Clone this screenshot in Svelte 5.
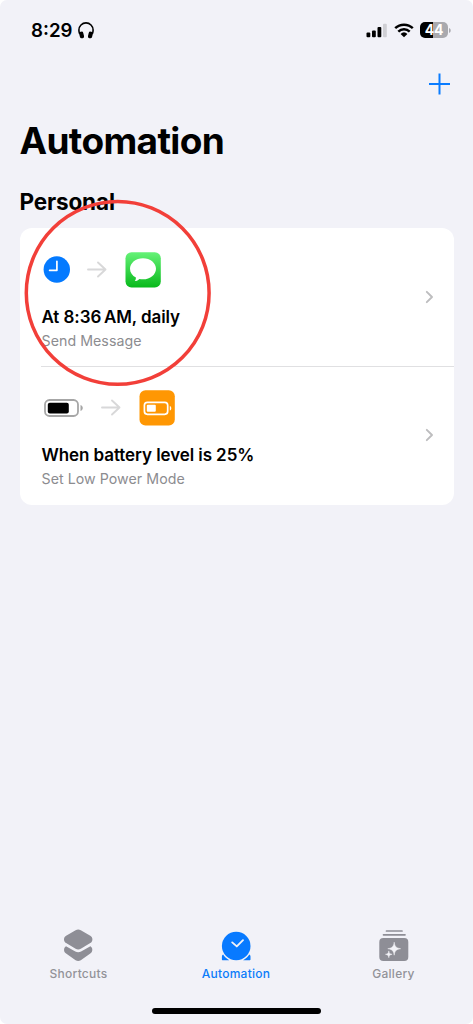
<script>
  const automations = [
    { kind: 'clock', title: 'At 8:36\u2009AM, daily', action: 'Send Message' },
    { kind: 'battery', title: 'When battery level is 25%', action: 'Set Low Power Mode' }
  ];
</script>

<div class="screen">
  <header class="status">
    <div class="status-left">
      <span class="time">8:29</span>
      <svg width="16" height="17" viewBox="0 0 16 17">
        <path d="M1.700 12C1.100 10.600.9 9.400.9 8a7.100 7.100 0 0 1 14.200 0c0 1.400-.2 2.600-.8 4" fill="none" stroke="#000" stroke-width="1.600" />
        <rect x="1.500" y="9.600" width="4.200" height="6.700" rx="1.800" transform="rotate(-14 3.600 12.900)" />
        <rect x="10.300" y="9.600" width="4.200" height="6.700" rx="1.800" transform="rotate(14 12.400 12.900)" />
      </svg>
    </div>
    <div class="status-right">
      <svg width="22" height="15" viewBox="0 0 22 15">
        <rect x="0.500" y="9.500" width="3.800" height="4.700" rx="1" />
        <rect x="6" y="7.500" width="3.800" height="6.700" rx="1" />
        <rect x="11.500" y="4" width="3.800" height="10.200" rx="1" />
        <rect x="17" y="0.800" width="3.800" height="13.400" rx="1" fill="#cfcfd4" />
      </svg>
      <svg class="wifi" width="20" height="15" viewBox="0 0 20 15">
        <g fill="none" stroke="#000" stroke-width="2.500">
          <path d="M1.200 5.200a12.800 12.800 0 0 1 17.600 0" />
          <path d="M4.300 8.600a8.300 8.300 0 0 1 11.400 0" />
        </g>
        <path d="M6.600 10.900a5 5 0 0 1 6.800 0L10 14.300Z" />
      </svg>
      <div class="power"><span>44</span></div>
      <svg width="2" height="5" viewBox="0 0 2 5"><path d="M0 0C2.300.8 2.300 4.200 0 5Z" fill="#a9a9ae" /></svg>
    </div>
  </header>

  <nav class="toolbar">
    <svg width="21" height="22" viewBox="0 0 21 22">
      <path d="M10.500.5v21M0 11h21" stroke="#0a7cff" stroke-width="2" fill="none" />
    </svg>
  </nav>

  <h1>Automation</h1>
  <h2>Personal</h2>

  <main class="card">
    {#each automations as item}
      <section class="row {item.kind}">
        <div class="details">
          <div class="icons">
            {#if item.kind === 'clock'}
              <svg class="trigger" width="27" height="27" viewBox="0 0 27 27">
                <circle cx="13.800" cy="13.500" r="13.200" fill="#047aff" />
                <path d="M13.900 5.300v9H6.600" fill="none" stroke="#fff" stroke-width="1.700" stroke-linecap="round" stroke-linejoin="round" />
              </svg>
            {:else}
              <svg class="trigger" width="39" height="18" viewBox="0 0 39 18">
                <rect x="1" y="1" width="33" height="16" rx="4.500" fill="none" stroke="#a6a6a6" stroke-width="1.800" />
                <rect x="3.800" y="3.800" width="21" height="10.600" rx="2" />
                <path d="M36.500 6c3 1.200 3 4.800 0 6Z" fill="#a6a6a6" />
              </svg>
            {/if}
            <svg class="arrow" width="20" height="17" viewBox="0 0 20 17">
              <path d="M1 8.500h17.500M11 1.500l7.500 7-7.500 7" fill="none" stroke="#d8d8d9" stroke-width="1.900" stroke-linecap="round" stroke-linejoin="round" />
            </svg>
            {#if item.kind === 'clock'}
              <svg width="36" height="36" viewBox="0 0 36 36">
                <defs>
                  <linearGradient id="message-green" x1="0" y1="0" x2="0" y2="1">
                    <stop offset="0" stop-color="#65f277" />
                    <stop offset="1" stop-color="#08b91b" />
                  </linearGradient>
                </defs>
                <rect x=".5" y=".3" width="35.300" height="35.300" rx="6" fill="url(#message-green)" />
                <path d="M18 6.200c7.200 0 13 4.700 13 10.500s-5.800 10.600-13 10.600c-1.300 0-2.500-.1-3.600-.4-1 1-2.700 2-4.700 2.200.8-.8 1.300-2.100 1.200-3.600C7.300 23.600 5 20.400 5 16.700 5 10.900 10.800 6.200 18 6.200Z" fill="#fff" />
              </svg>
            {:else}
              <svg width="36" height="36" viewBox="0 0 36 36">
                <rect x=".5" y=".3" width="35.300" height="35.300" rx="6" fill="#ff9703" />
                <rect x="5.400" y="12.300" width="23.300" height="12" rx="3" fill="none" stroke="#fff" stroke-width="1.700" />
                <rect x="7.800" y="14.800" width="9" height="7" rx="1" fill="#fff" />
                <path d="M30.800 16c2 .7 2 3.900 0 4.600Z" fill="#fff" />
              </svg>
            {/if}
          </div>
          <h3>{item.title}</h3>
          <p>{item.action}</p>
        </div>
        <svg width="9" height="14" viewBox="0 0 9 14">
          <path d="M1.800 1.800 7 7l-5.200 5.200" fill="none" stroke="#bdbdbf" stroke-width="1.900" stroke-linecap="round" stroke-linejoin="round" />
        </svg>
      </section>
    {/each}
  </main>

  <footer class="tabs">
    <div class="tab">
      <svg width="32" height="36" viewBox="0 0 32 36">
        <path transform="translate(-.5 0)" d="M13.100 1.300a5.500 5.500 0 0 1 5.200 0l9.500 5.400c2.800 1.600 2.800 5.800 0 7.400l-9.500 5.700a5.500 5.500 0 0 1-5.200 0L3.600 14.100c-2.800-1.600-2.800-5.800 0-7.400Z" fill="#8e8e96" />
        <path transform="translate(-.5 0)" d="M3.500 17.200 12.800 22.500a6 6 0 0 0 5.800 0L27.900 17.200c2.600 1.600 2.600 5.600-.1 7.300l-9.500 6.700a5 5 0 0 1-5.200 0l-9.500-6.700c-2.700-1.700-2.700-5.700-.1-7.300Z" fill="#8e8e96" />
      </svg>
      <span>Shortcuts</span>
    </div>
    <div class="tab active">
      <svg width="32" height="36" viewBox="0 0 32 36">
        <circle cx="16.200" cy="17" r="14.300" fill="#087aff" />
        <path d="m12.200 13.400 4.600 4 6.200-6.200" fill="none" stroke="#f2f2f7" stroke-width="1.900" stroke-linecap="round" stroke-linejoin="round" />
        <path d="M3.100 25.600c1.600 2.400 3.600 4.300 6.200 5.700H2.900c-.7 0-1-.4-1-1.100v-2.700c0-.8.4-1.400 1.200-1.900ZM29.300 25.600c-1.600 2.400-3.600 4.300-6.200 5.700h6.400c.7 0 1-.4 1-1.100v-2.700c0-.8-.4-1.400-1.200-1.900Z" fill="#087aff" />
      </svg>
      <span>Automation</span>
    </div>
    <div class="tab">
      <svg width="32" height="36" viewBox="0 0 32 36">
        <path d="M8.500 2h15.500M5.500 5.800h21.500" stroke="#8e8e96" stroke-width="1.700" stroke-linecap="round" />
        <rect x="1.300" y="9" width="29" height="23" rx="4" fill="#8e8e96" />
        <path d="M16.200 13.200C16.800 17.500 18 19 22.600 19.700 18 20.400 16.800 21.900 16.200 26.200 15.600 21.900 14.400 20.400 9.800 19.700 14.400 19 15.600 17.500 16.200 13.200ZM10.800 21.900c.3 2.300 1 3 3.300 3.400-2.300.4-3 1.100-3.300 3.400-.3-2.300-1-3-3.300-3.400 2.300-.4 3-1.100 3.300-3.400Z" fill="#f2f2f7" stroke="#f2f2f7" stroke-width=".5" />
      </svg>
      <span>Gallery</span>
    </div>
  </footer>
  <div class="home-indicator"></div>

  <svg class="highlight" width="188" height="188" viewBox="0 0 188 188">
    <circle cx="93.700" cy="93.900" r="91.400" fill="none" stroke="#f23f39" stroke-width="3.500" />
  </svg>
</div>

<style>
  :global(body) { margin: 0; background: #fff; }
  .screen {
    position: relative;
    display: flex;
    flex-direction: column;
    box-sizing: border-box;
    width: 473px;
    height: 1024px;
    overflow: hidden;
    border-radius: 7px;
    background: #f2f2f8;
    color: #000;
    font-family: Inter, "Liberation Sans", sans-serif;
  }
  svg { display: block; flex: none; }
  h1, h2, h3, p { margin: 0; white-space: nowrap; }
  .status { display: flex; justify-content: space-between; align-items: center; height: 60px; padding: 0 22px 0 31px; }
  .status-left, .status-right { display: flex; align-items: center; }
  .status-left { gap: 5px; }
  .time { padding-top: 1px; font-size: 18.7px; font-weight: 600; line-height: 24px; }
  .wifi { margin-left: 6px; }
  .power {
    display: grid;
    place-items: center;
    width: 28px;
    height: 16px;
    margin: 0 1px 0 6px;
    border-radius: 5px;
    background: linear-gradient(90deg, #000 45%, #a9a9ae 45%);
  }
  .power span { color: #fff; font-size: 14px; font-weight: 700; line-height: 16px; letter-spacing: -0.3px; }
  .toolbar { display: flex; justify-content: flex-end; align-items: center; height: 48px; padding-right: 23px; }
  h1 { margin: 10px 0 0 19.5px; font-size: 37px; font-weight: 700; line-height: 46px; letter-spacing: -0.65px; }
  h2 { margin: 24px 0 0 19.5px; font-size: 22.5px; font-weight: 700; line-height: 28px; letter-spacing: -0.15px; }
  .card { margin: 12px 19.5px 0; border-radius: 12px; background: #fff; overflow: hidden; }
  .row { display: flex; justify-content: space-between; align-items: center; height: 138.3px; padding: 0 19.5px 0 22px; }
  .row + .row { position: relative; }
  .row + .row::before { content: ""; position: absolute; top: 0; left: 21px; right: 0; height: 1px; background: #e0e0e2; }
  .details { align-self: flex-start; padding-top: 23.5px; }
  .icons { display: flex; align-items: center; height: 36px; }
  .trigger { margin-left: 2px; }
  .clock .trigger { margin-left: 1.7px; }
  .arrow { margin: 0 18px 0 17px; }
  .battery .arrow { margin: 0 18.5px 0 18px; }
  h3 { margin-top: 17px; font-size: 17px; font-weight: 600; line-height: 24px; letter-spacing: -0.08px; }
  p { color: #8c8c90; font-size: 14.2px; line-height: 24px; letter-spacing: 0.05px; }
  .tabs { display: grid; grid-template-columns: 157px 158px 157px; height: 57px; margin-top: auto; padding-bottom: 22px; }
  .tab { display: flex; flex-direction: column; align-items: center; color: #929298; }
  .tab.active { color: #0b7cfa; }
  .tab span { font-size: 12px; font-weight: 500; line-height: 18px; letter-spacing: 0.25px; }
  .home-indicator { align-self: center; width: 169px; height: 6px; margin-bottom: 10px; border-radius: 3px; background: #000; }
  .highlight { position: absolute; left: 24px; top: 199px; }
</style>
